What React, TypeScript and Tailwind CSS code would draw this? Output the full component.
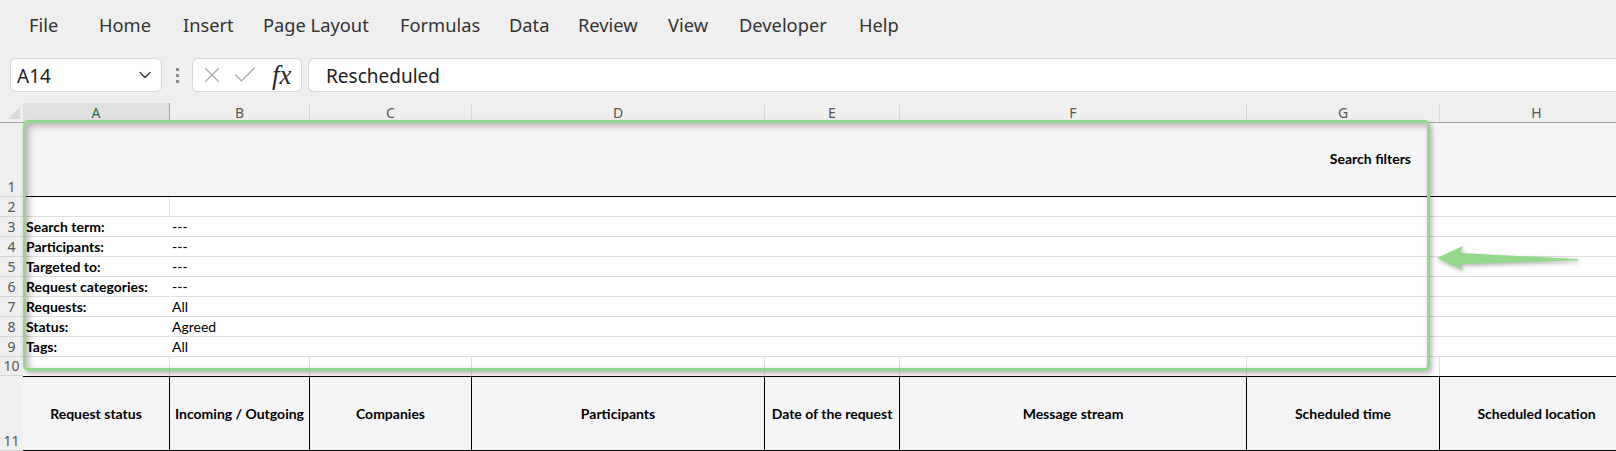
import { ChevronDown, X, Check } from "lucide-react";

const menu = [
  { label: "File", w: "w-[70px]" },
  { label: "Home", w: "w-[84px]" },
  { label: "Insert", w: "w-[80px]" },
  { label: "Page Layout", w: "w-[137px]" },
  { label: "Formulas", w: "w-[109px]" },
  { label: "Data", w: "w-[69px]" },
  { label: "Review", w: "w-[90px]" },
  { label: "View", w: "w-[71px]" },
  { label: "Developer", w: "w-[120px]" },
  { label: "Help", w: "w-[60px]" },
];

// row header + columns A..H, last one runs past the window
const grid = "grid grid-cols-[23px_147px_140px_162px_293px_135px_347px_193px_194px]";

const columns = ["A", "B", "C", "D", "E", "F", "G", "H"];

const filters = [
  { row: 3, label: "Search term:", value: "---" },
  { row: 4, label: "Participants:", value: "---" },
  { row: 5, label: "Targeted to:", value: "---" },
  { row: 6, label: "Request categories:", value: "---" },
  { row: 7, label: "Requests:", value: "All" },
  { row: 8, label: "Status:", value: "Agreed" },
  { row: 9, label: "Tags:", value: "All" },
];

const headers = [
  "Request status",
  "Incoming / Outgoing",
  "Companies",
  "Participants",
  "Date of the request",
  "Message stream",
  "Scheduled time",
  "Scheduled location",
];

function RowNum({ n, className }: { n: number; className: string }) {
  return (
    <div className={`flex items-end justify-center border-b border-[#d4d4d4] bg-[#efefef] text-[14px] leading-[19px] text-[#555] ${className}`}>
      {n}
    </div>
  );
}

function FilterRow({ row, label, value }: { row: number; label: string; value: string }) {
  return (
    <div className={grid}>
      <RowNum n={row} className="h-5" />
      <div className="h-5 whitespace-nowrap border-b border-[#dedede] pl-[3px] font-['Lato',sans-serif] text-[14px] font-bold leading-[20px] text-black">
        {label}
      </div>
      <div className="col-span-7 h-5 border-b border-[#dedede] pl-[2px] font-['Lato',sans-serif] text-[14px] leading-[20px] text-black">
        {value}
      </div>
    </div>
  );
}

export default function App() {
  return (
    <div className="relative h-[451px] w-[1616px] overflow-hidden bg-[#efefef] font-['Noto_Sans',sans-serif]">
      <div className="flex h-[50px] items-center pl-[29px] text-[18.3px] text-[#333]">
        {menu.map((m) => (
          <div key={m.label} className={`${m.w} whitespace-nowrap`}>
            {m.label}
          </div>
        ))}
      </div>

      <div className="mt-[8px] flex h-[34px] items-stretch text-[19px] text-[#222]">
        <div className="ml-[10px] flex w-[152px] items-center justify-between rounded-[6px] border border-[#d6d6d6] bg-white px-[6px]">
          <span className="pt-[2px]">A14</span>
          <ChevronDown size={20} strokeWidth={1.5} className="text-[#333]" />
        </div>
        <div className="flex w-[30px] flex-col items-center justify-center gap-[3px]">
          <span className="h-[3px] w-[3px] bg-[#8a8a8a]" />
          <span className="h-[3px] w-[3px] bg-[#8a8a8a]" />
          <span className="h-[3px] w-[3px] bg-[#8a8a8a]" />
        </div>
        <div className="flex w-[110px] items-center rounded-[6px] border border-[#d6d6d6] bg-white pl-[6px]">
          <X size={26} strokeWidth={1.1} className="text-[#a8a8a8]" />
          <Check size={28} strokeWidth={1.1} className="ml-[6px] text-[#a8a8a8]" />
          <span className="ml-[13px] font-['Liberation_Serif',serif] text-[27px] font-normal italic leading-none text-[#2a2a2a]">
            fx
          </span>
        </div>
        <div className="ml-[6px] flex flex-1 items-center rounded-l-[6px] border border-r-0 border-[#d6d6d6] bg-white pl-[17px] pt-[2px]">
          Rescheduled
        </div>
      </div>

      <div className={`mt-[11px] h-[20px] ${grid} border-b border-[#a0a0a0] text-[14px] leading-[19px] text-[#555]`}>
        <div className="relative">
          <div className="absolute bottom-[3px] right-[3px] h-0 w-0 border-b-[12px] border-l-[12px] border-b-[#d8d8d8] border-l-transparent" />
        </div>
        {columns.map((c, i) => (
          <div
            key={c}
            className={`border-r text-center ${i === 0 ? "border-[#a8a8a8] bg-[#e0e0e0] text-[#1e7145]" : "border-[#d8d8d8]"}`}
          >
            {c}
          </div>
        ))}
      </div>

      <div className={grid}>
        <RowNum n={1} className="h-[74px]" />
        <div className="col-span-8 h-[74px] border-b border-black bg-[#f5f5f8]">
          <div className="flex h-full w-[1416px] items-center justify-end pb-[2px] pr-[28px] font-['Lato',sans-serif] text-[14px] font-bold text-black">
            Search filters
          </div>
        </div>
      </div>

      <div className={grid}>
        <RowNum n={2} className="h-5" />
        <div className="h-5 border-b border-r border-[#dedede] bg-white" />
        <div className="col-span-7 h-5 border-b border-[#dedede] bg-white" />
      </div>

      <div className="bg-white">
        {filters.map((f) => (
          <FilterRow key={f.row} {...f} />
        ))}
      </div>

      <div className={grid}>
        <RowNum n={10} className="h-[19px]" />
        {columns.map((c) => (
          <div key={c} className="h-[19px] border-r border-[#dedede] bg-white" />
        ))}
      </div>

      <div className={grid}>
        <RowNum n={11} className="h-[75px]" />
        {headers.map((h) => (
          <div
            key={h}
            className="flex h-[75px] items-center justify-center whitespace-nowrap border-y border-r border-black bg-[#f5f5f8] font-['Lato',sans-serif] text-[14px] font-bold text-black"
          >
            {h}
          </div>
        ))}
      </div>

      {/* green highlight drawn on top of the sheet */}
      <div className="absolute left-[23px] top-[120px] h-[251px] w-[1407px] rounded-[5px] border-[3px] border-[#92d98c] shadow-[2px_3px_5px_rgba(0,0,0,0.28),inset_3px_3px_7px_rgba(0,0,0,0.28)]" />
      <svg className="absolute left-[1430px] top-[240px]" width="160" height="40" viewBox="0 0 160 40">
        <polygon
          points="7,18 33,6 30,13 148,19 148,20.5 30,24 33,30"
          fill="#92d98c"
          className="drop-shadow-[1px_2px_2px_rgba(0,0,0,0.3)]"
        />
      </svg>
    </div>
  );
}
